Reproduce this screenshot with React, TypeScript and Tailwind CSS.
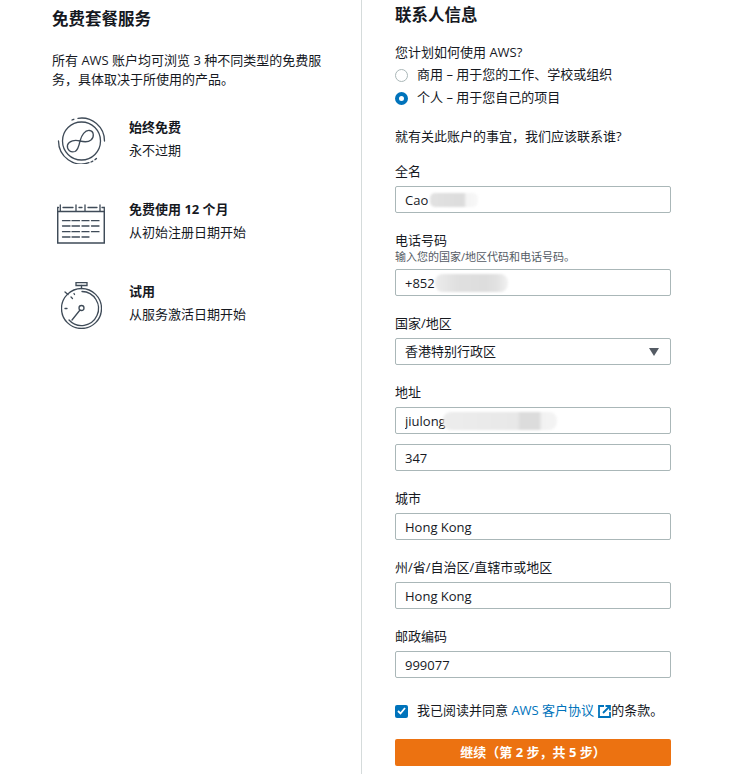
const font = { fontFamily: '"Open Sans", "Noto Sans CJK SC", sans-serif' }

function InfinityIcon() {
  return (
    <svg width="49" height="47" viewBox="0 0 49 47" fill="none" stroke="#3f4b58" strokeWidth="1.3" strokeLinecap="round">
      <circle cx="24.500" cy="24" r="19" />
      <path d="M15 3 A 23 23 0 0 1 19 1.700" strokeDasharray="2 2.500" />
      <path d="M21 1.300 A 23 23 0 0 1 47.500 24" />
      <path d="M1.500 24 A 23 23 0 0 0 32 45.700" />
      <path d="M34 45 A 23 23 0 0 0 40 41" strokeDasharray="2 2.500" />
      <path d="M23 24 C 24.500 18 28 13 32.500 13.500 C 37 14 37.500 20 34 23 C 31 25.500 27 25 23 24 C 18 22.800 12 23.500 10.500 28 C 9.500 33 14 36 18 34.500 C 21 33 22 29 23 24 Z" />
    </svg>
  )
}

function CalendarIcon() {
  return (
    <svg width="48" height="40" viewBox="0 0 48 40" fill="none" stroke="#3f4b58" strokeWidth="1.3" strokeLinecap="round">
      <path d="M3.300 1 V7 M19 1 V7 M28 1 V7 M43 1 V7" />
      <path d="M6 3.500 H16 M22 3.500 H25 M31 3.500 H40" />
      <path d="M0.700 7.600 V3.500 H1.500 M45 3.500 H47.300 V7.600" />
      <path d="M0.700 7.600 H47.300" strokeWidth="1.500" />
      <path d="M0.700 7.600 V39 H47.300 V7.600" strokeWidth="1.500" />
      <path d="M5.500 16.700 H13 M15 16.700 H22.500 M25 16.700 H32 M34.500 16.700 H42" />
      <path d="M5.500 22 H13 M15 22 H22.500 M25 22 H32 M34.500 22 H42" />
      <path d="M5.500 27.700 H13 M15 27.700 H22.500 M25 27.700 H32 M34.500 27.700 H42" />
      <path d="M5.500 33 H13 M15 33 H22.500 M25 33 H32" />
    </svg>
  )
}

function TimerIcon() {
  return (
    <svg width="41" height="47" viewBox="0 0 41 47" fill="none" stroke="#3f4b58" strokeWidth="1.3" strokeLinecap="round">
      <path d="M15 0.700 H26 V3.500 H15 Z" />
      <path d="M20.500 3.500 V6.500" />
      <circle cx="20.500" cy="26.500" r="20" />
      <path d="M21 9.500 A 17 17 0 1 1 8 38" />
      <path d="M4 10 L7 12.500" />
      <path d="M10 15 L11.500 16.500 M4 26.500 H6 M13 11.500 L13.500 12.500" />
      <circle cx="20.500" cy="26" r="2.500" />
      <path d="M19 28 L11 38" />
    </svg>
  )
}

function Freebie({ icon, title, desc }: { icon: React.ReactNode; title: string; desc: string }) {
  return (
    <div className="flex items-start h-[52px] pl-[5px]">
      <div className="w-[72px] shrink-0">{icon}</div>
      <div>
        <div className="text-[13px] font-bold leading-[20px] text-[#16191f]">{title}</div>
        <div className="text-[13px] leading-[20px] mt-[3px] text-[#16191f]">{desc}</div>
      </div>
    </div>
  )
}

function Field({ label, hint, value, smudge }: { label: string; hint?: string; value: string; smudge?: string }) {
  return (
    <div className="mt-[17px]">
      <div className="text-[13px] leading-[20px] text-[#16191f]">{label}</div>
      {hint && <div className="text-[11px] leading-[14px] text-[#545b64]">{hint}</div>}
      <div className="relative mt-[5px]">
        <input
          readOnly
          value={value}
          className="block w-full h-[27px] border border-[#aab7b8] rounded-[2px] bg-white px-[9px] text-[13px] text-[#16191f] outline-none"
          style={font}
        />
        {smudge && <div className={smudge} />}
      </div>
    </div>
  )
}

export default function App() {
  return (
    <div className="w-[750px] h-[774px] bg-white overflow-hidden flex text-[#16191f]" style={font}>
      <div className="w-[362px] h-full border-r border-[#d5dbdb] pl-[52px] pr-[40px] shrink-0">
        <h2 className="text-[16.500px] font-bold leading-[20px] mt-[9px]">免费套餐服务</h2>
        <p className="text-[13px] leading-[19px] mt-[22px] w-[270px]">所有 AWS 账户均可浏览 3 种不同类型的免费服务，具体取决于所使用的产品。</p>
        <div className="mt-[28px]">
          <Freebie icon={<InfinityIcon />} title="始终免费" desc="永不过期" />
        </div>
        <div className="mt-[30px]">
          <Freebie icon={<div className="pt-[5px]"><CalendarIcon /></div>} title="免费使用 12 个月" desc="从初始注册日期开始" />
        </div>
        <div className="mt-[30px]">
          <Freebie icon={<div className="pl-[4px] pt-[1px]"><TimerIcon /></div>} title="试用" desc="从服务激活日期开始" />
        </div>
      </div>

      <div className="pl-[33px] w-[309px] shrink-0">
        <h2 className="text-[16.500px] font-bold leading-[20px] mt-[5px]">联系人信息</h2>
        <div className="text-[13px] leading-[20px] mt-[17px]">您计划如何使用 AWS?</div>
        <div className="flex items-center h-[20px] mt-[3px] text-[13px]">
          <span className="w-[13px] h-[13px] rounded-full border border-[#aab7b8] bg-white" />
          <span className="ml-[9px]">商用 – 用于您的工作、学校或组织</span>
        </div>
        <div className="flex items-center h-[20px] mt-[3px] text-[13px]">
          <span className="w-[13px] h-[13px] rounded-full border-[4px] border-[#0073bb] bg-white" />
          <span className="ml-[9px]">个人 – 用于您自己的项目</span>
        </div>
        <div className="text-[13px] leading-[20px] mt-[18px]">就有关此账户的事宜，我们应该联系谁?</div>

        <div className="mt-[-2px]">
          <Field label="全名" value="Cao" smudge="absolute left-[35px] top-[7px] w-[48px] h-[14px] rounded-[5px] blur-[1px] bg-[linear-gradient(90deg,#e2e2e2_0%,#dcdcdc_70%,#f4f4f4_76%,#f8f8f8_100%)]" />
          <Field label="电话号码" hint="输入您的国家/地区代码和电话号码。" value="+852" smudge="absolute left-[40px] top-[5px] w-[73px] h-[18px] rounded-[8px] blur-[1px] bg-[linear-gradient(90deg,#ececec_0%,#e0e0e0_30%,#dddddd_70%,#e2e2e2_85%,#f2f2f2_100%)]" />
          <div className="mt-[17px]">
            <div className="text-[13px] leading-[20px]">国家/地区</div>
            <div className="flex items-center justify-between mt-[5px] h-[27px] border border-[#aab7b8] rounded-[2px] px-[9px] text-[13px]">
              <span>香港特别行政区</span>
              <svg width="10" height="8" viewBox="0 0 10 8" className="mr-[2px]"><path d="M0 0 H10 L5 8 Z" fill="#545b64" /></svg>
            </div>
          </div>
          <Field label="地址" value="jiulong" smudge="absolute left-[48px] top-[5px] w-[114px] h-[18px] rounded-[8px] blur-[1px] bg-[linear-gradient(90deg,#ededed_0%,#e8e8e8_65%,#dcdcdc_68%,#dcdcdc_84%,#f2f2f2_87%,#f4f4f4_100%)]" />
          <div className="mt-[10px]">
            <input readOnly value="347" className="block w-full h-[27px] border border-[#aab7b8] rounded-[2px] px-[9px] text-[13px] text-[#16191f] outline-none" style={font} />
          </div>
          <Field label="城市" value="Hong Kong" />
          <Field label="州/省/自治区/直辖市或地区" value="Hong Kong" />
          <Field label="邮政编码" value="999077" />
        </div>

        <div className="flex items-center mt-[23px] h-[20px] text-[13px]">
          <span className="w-[13px] h-[13px] rounded-[2px] bg-[#0073bb] flex items-center justify-center">
            <svg width="9" height="8" viewBox="0 0 9 8" fill="none" stroke="#fff" strokeWidth="1.800"><path d="M1 4 L3.500 6.500 L8 1" /></svg>
          </span>
          <span className="ml-[9px]">我已阅读并同意 <span className="text-[#0073bb]">AWS 客户协议</span></span>
          <svg width="13" height="13" viewBox="0 0 13 13" fill="none" stroke="#0073bb" strokeWidth="1.800" className="ml-[4px]">
            <path d="M6 1 H1 V12 H12 V7" />
            <path d="M5 8 L11.500 1.500 M7.500 1 H12 V5.500" />
          </svg>
          <span>的条款。</span>
        </div>
        <button className="block w-full h-[27px] mt-[18px] rounded-[2px] bg-[#ec7211] text-white text-[13px] font-bold" style={font}>继续（第 2 步，共 5 步）</button>
      </div>
    </div>
  )
}
